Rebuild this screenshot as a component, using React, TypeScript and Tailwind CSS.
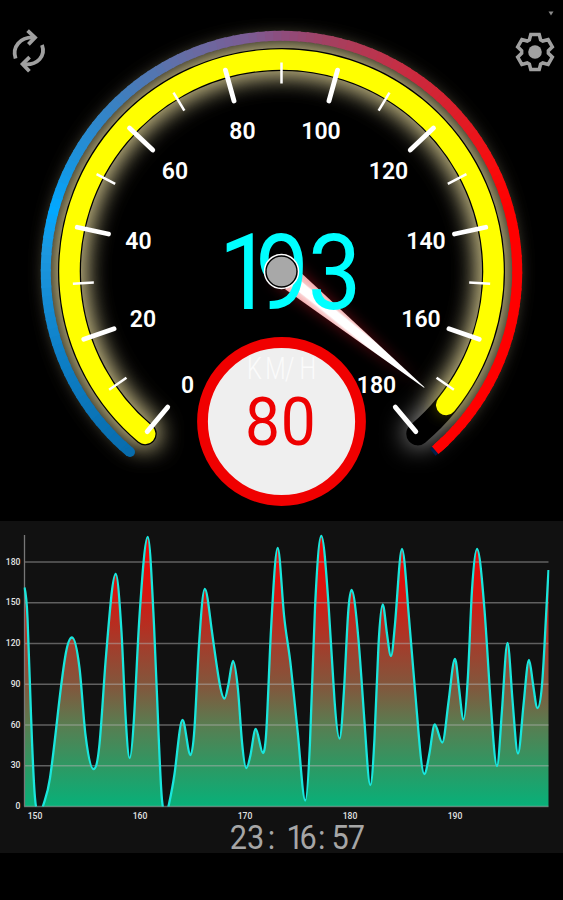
import React from "react";

const CX = 281.5;
const CY = 271.5;

const polar = (r: number, deg: number): [number, number] => {
  const a = (deg * Math.PI) / 180;
  return [CX + r * Math.cos(a), CY + r * Math.sin(a)];
};

const arc = (r: number, from: number, to: number) => {
  const [x0, y0] = polar(r, from);
  const [x1, y1] = polar(r, to);
  return `M${x0.toFixed(2)} ${y0.toFixed(2)}A${r} ${r} 0 ${to - from > 180 ? 1 : 0} 1 ${x1.toFixed(2)} ${y1.toFixed(2)}`;
};

const ringStops: [number, number[]][] = [
  [130, [8, 108, 172]],
  [160, [14, 128, 200]],
  [185, [28, 152, 224]],
  [195, [2, 168, 255]],
  [208, [28, 146, 220]],
  [224, [56, 130, 195]],
  [245, [100, 110, 166]],
  [262, [124, 92, 148]],
  [272, [146, 74, 120]],
  [284, [168, 62, 92]],
  [300, [198, 46, 68]],
  [315, [216, 32, 46]],
  [332, [246, 14, 16]],
  [345, [255, 0, 0]],
  [410, [255, 0, 0]],
];

const ringColor = (deg: number) => {
  let i = 0;
  while (i < ringStops.length - 2 && deg > ringStops[i + 1][0]) i++;
  const [a, ca] = ringStops[i];
  const [b, cb] = ringStops[i + 1];
  const t = Math.min(1, Math.max(0, (deg - a) / (b - a)));
  return `rgb(${ca.map((v, k) => Math.round(v + (cb[k] - v) * t)).join(",")})`;
};

const labels: [string, number, number][] = [
  ["0", 187.5, 384.5],
  ["20", 143, 319],
  ["40", 138.5, 241],
  ["60", 175, 171],
  ["80", 242.5, 131],
  ["100", 321, 131],
  ["120", 388.5, 171],
  ["140", 426, 241],
  ["160", 421, 319],
  ["180", 376.5, 384.5],
];

function Gauge() {
  const ticks = Array.from({ length: 19 }, (_, i) => {
    const deg = 130 + (i * 280) / 18;
    const major = i % 2 === 0;
    return { p: polar(major ? 177 : 188, deg), q: polar(209, deg), major };
  });
  const steps = Array.from({ length: 139 }, (_, i) => 130 + i * 2);
  return (
    <svg className="block h-[521px] w-[563px]" viewBox="0 0 563 521" fill="none">
      <defs>
        <filter id="glow" filterUnits="userSpaceOnUse" x="-40" y="-40" width="643" height="600">
          <feGaussianBlur stdDeviation="13" />
        </filter>
        <filter id="soft" filterUnits="userSpaceOnUse" x="380" y="340" width="120" height="120">
          <feGaussianBlur stdDeviation="7" />
        </filter>
        <linearGradient id="needle" gradientUnits="userSpaceOnUse" x1="0" y1="-11.5" x2="0" y2="11.5">
          <stop offset="0" stopColor="#f3a9ab" />
          <stop offset="0.25" stopColor="#f7c4c4" />
          <stop offset="0.34" stopColor="#ffffff" />
          <stop offset="0.66" stopColor="#ffffff" />
          <stop offset="0.75" stopColor="#f9cfd0" />
          <stop offset="1" stopColor="#f3a9ab" />
        </linearGradient>
        <clipPath id="trackEnd">
          <path d="M420 380H500V470H380Z" />
        </clipPath>
      </defs>

      <path d={arc(212, 130, 410)} stroke="#ffffff" strokeOpacity="0.66" strokeWidth="24" strokeLinecap="round" filter="url(#glow)" />
      <path d={arc(212, 130, 399)} stroke="#ffe878" strokeOpacity="0.72" strokeWidth="24" strokeLinecap="round" filter="url(#glow)" />
      <path d={arc(212, 130, 410)} stroke="#000000" strokeWidth="23" strokeLinecap="round" />
      <g clipPath="url(#trackEnd)">
        <path d={arc(212, 390, 400)} stroke="#8a8000" strokeOpacity="0.5" strokeWidth="16" strokeLinecap="round" filter="url(#soft)" />
      </g>
      <path d={arc(212, 130, 399)} stroke="#ffff00" strokeWidth="20.5" strokeLinecap="round" />

      <path d={arc(235.7, 408, 410.1)} stroke="#02204c" strokeWidth="9" />
      {steps.map((d) => (
        <path key={d} d={arc(235.7, d, Math.min(d + 2.6, 409.3))} stroke={ringColor(d + 1)} strokeWidth="10" />
      ))}
      <path d={arc(235.7, 406, 409.3)} stroke="#ff0000" strokeWidth="10" />
      <circle cx={polar(235.7, 130)[0]} cy={polar(235.7, 130)[1]} r="5" fill={ringColor(130)} />

      {ticks.map(({ p, q, major }, i) => (
        <line key={i} x1={p[0]} y1={p[1]} x2={q[0]} y2={q[1]} stroke="#ffffff" strokeWidth={major ? 4.8 : 2.5} strokeLinecap={major ? "round" : "butt"} />
      ))}

      {labels.map(([t, x, y]) => (
        <text key={t} x={x} y={y + 8.3} fill="#ffffff" textAnchor="middle" className="font-['Roboto',sans-serif] text-[23px] font-semibold">
          {t}
        </text>
      ))}

      <g transform={`translate(${CX} ${CY}) rotate(39.1)`}>
        <path d="M0 -14L176 0L0 14Z" fill="#ff2030" fillOpacity="0.35" className="blur-[7px]" />
        <path d="M14 -11.5L184 -0.4V0.4L14 11.5Z" fill="url(#needle)" />
        <path d="M14 -5L184 0L14 5Z" fill="#ffffff" />
      </g>

      <circle cx="281.5" cy="421.5" r="79" fill="#efefef" stroke="#f00000" strokeWidth="10.8" />
      <text transform="scale(0.76 1)" y="379.500" x="325 349 375 394" fill="#fbfbfb" className="font-['Roboto',sans-serif] text-[31px] font-light">KM/H</text>
      <text transform="scale(0.93 1)" x="263.5 302" y="445.5" fill="#ee0000" className="font-['Roboto',sans-serif] text-[67px] font-normal">80</text>

      <text transform="scale(0.9 1)" x="243 284 342" y="309.500" fill="#00ffff" className="font-['Roboto',sans-serif] text-[106px] font-normal">193</text>

      <circle cx={CX} cy={CY} r="17" fill="#000000" stroke="#ffffff" strokeWidth="1.5" />
      <circle cx={CX} cy={CY} r="14.8" fill="#a8a8a8" />
    </svg>
  );
}

function RefreshIcon() {
  return (
    <svg className="h-[50px] w-[42px]" viewBox="8 26 42 50" fill="none" stroke="#a0a0a0" strokeWidth="3.8">
      <path d="M15.6 58.5C11.8 47 20 36.8 34 37.4" />
      <path d="M27.6 30.6L35 37.5L28.4 44.4" />
      <path d="M42 45C46 56 37.5 65.4 24 64.3" />
      <path d="M29.6 57.2L22.6 64L29.4 71.2" />
    </svg>
  );
}

function GearIcon() {
  const pts: string[] = [];
  for (let i = 0; i < 6; i++) {
    const a = (i * Math.PI) / 3;
    for (const [x, y] of [[-5.6, -12.2], [-4.2, -17.6], [4.2, -17.6], [5.6, -12.2]]) {
      pts.push(`${(x * Math.cos(a) - y * Math.sin(a)).toFixed(2)},${(x * Math.sin(a) + y * Math.cos(a)).toFixed(2)}`);
    }
  }
  return (
    <svg className="h-[42px] w-[42px]" viewBox="-21 -21 42 42" fill="none">
      <polygon points={pts.join(" ")} stroke="#a0a0a0" strokeWidth="3.5" strokeLinejoin="miter" />
      <circle r="6.8" fill="#a0a0a0" />
    </svg>
  );
}

const samples: [number, number][] = [
  [24.5, 587.5], [27.5, 618], [31, 715], [35, 798], [38.5, 812], [43, 806], [50, 778], [57, 721],
  [65, 658], [72, 637.5], [79.5, 668], [85.5, 735], [93.5, 769], [99.5, 744], [106, 656], [115.7, 574],
  [121.5, 632], [125.5, 715], [129.7, 758], [134, 718], [139.5, 616], [147.8, 537], [154, 625],
  [158, 720], [162, 800], [165.3, 812], [169, 804], [174.5, 774], [182.5, 720], [190.5, 755], [194.5, 728],
  [199, 645], [204.8, 589], [212, 632], [219, 680], [224.5, 698.5], [228.5, 684], [233, 661], [238, 690],
  [242, 742], [246.3, 768], [250.5, 755], [255.7, 729], [263, 753], [266.5, 728], [271, 630], [277.7, 548],
  [284, 615], [291, 668], [298, 735], [305.3, 800.5], [310, 742], [315, 608], [321.3, 536], [328.5, 604],
  [334.5, 700], [339.5, 738.5], [344, 690], [348, 615], [351.5, 590], [358.5, 640], [364.5, 722],
  [370.3, 785], [374.5, 738], [378.5, 645], [382.7, 604.5], [387, 634], [391, 656], [395, 624], [402, 549],
  [408.5, 612], [415, 690], [424.3, 774], [429.5, 753], [434.7, 724.5], [442.3, 742.5], [448.5, 702],
  [455, 659], [459, 688], [463.5, 719.5], [468, 675], [472, 590], [477, 549], [484.5, 610], [490.5, 700],
  [497, 766], [502, 710], [507.5, 643], [512.5, 700], [518, 753.5], [523.5, 705], [529, 660], [533, 684],
  [537.5, 708], [542, 685], [545.5, 626], [548.5, 570],
];

// Monotone cubic interpolation keeps every local extremum flat.
const smooth = (pts: [number, number][]) => {
  const n = pts.length;
  const s = pts.slice(1).map((p, i) => (p[1] - pts[i][1]) / (p[0] - pts[i][0]));
  const m = pts.map((_, i) => {
    if (i === 0) return s[0] * 0.4;
    if (i === n - 1) return s[n - 2];
    if (s[i - 1] * s[i] <= 0) return 0;
    const cap = 2.8 * Math.min(Math.abs(s[i - 1]), Math.abs(s[i]));
    const mean = (pts[i + 1][1] - pts[i - 1][1]) / (pts[i + 1][0] - pts[i - 1][0]);
    return Math.sign(mean) * Math.min(Math.abs(mean) * 1.12, cap);
  });
  let d = `M${pts[0][0]} ${pts[0][1]}`;
  for (let i = 1; i < n; i++) {
    const h = (pts[i][0] - pts[i - 1][0]) / 3;
    d += `C${(pts[i - 1][0] + h).toFixed(2)} ${(pts[i - 1][1] + m[i - 1] * h).toFixed(2)} ${(pts[i][0] - h).toFixed(2)} ${(pts[i][1] - m[i] * h).toFixed(2)} ${pts[i][0]} ${pts[i][1]}`;
  }
  return d;
};

function History() {
  const line = smooth(samples);
  return (
    <svg className="block h-[303px] w-[563px]" viewBox="0 521 563 303" fill="none">
      <defs>
        <linearGradient id="area" gradientUnits="userSpaceOnUse" x1="0" y1="536" x2="0" y2="806">
          <stop offset="0" stopColor="#f60000" />
          <stop offset="0.22" stopColor="#d21811" />
          <stop offset="0.4" stopColor="#a43c2b" />
          <stop offset="0.57" stopColor="#7e5a3e" />
          <stop offset="0.7" stopColor="#597d51" />
          <stop offset="0.85" stopColor="#2e9863" />
          <stop offset="1" stopColor="#08b079" />
        </linearGradient>
        <clipPath id="plot">
          <path d="M23.5 534H549.5V806.5H23.5Z" />
        </clipPath>
      </defs>
      <g clipPath="url(#plot)">
        <path d={`${line}V830H24.5Z`} fill="url(#area)" />
      </g>
      {[0, 30, 60, 90, 120, 150, 180].map((v) => (
        <g key={v}>
          <path d={`M24 ${806.5 - v * 1.3583}H548.5`} stroke="#b0b0b0" strokeOpacity="0.5" strokeWidth="1.4" />
          <text x="20.5" y={809 - v * 1.3583} textAnchor="end" fill="#e4e4e4" className="font-['Roboto',sans-serif] text-[8.6px] font-medium">{v}</text>
        </g>
      ))}
      <path d="M24.5 535V806.5" stroke="#777777" strokeWidth="1.3" />
      <g clipPath="url(#plot)">
        <path d={line} stroke="#19e6dc" strokeWidth="2.3" strokeLinejoin="round" />
      </g>
      {[150, 160, 170, 180, 190].map((v, i) => (
        <text key={v} x={35 + i * 105} y="819" textAnchor="middle" fill="#e4e4e4" className="font-['Roboto',sans-serif] text-[8.6px] font-medium">{v}</text>
      ))}
    </svg>
  );
}

export default function App() {
  return (
    <main className="flex h-[900px] w-[563px] flex-col overflow-hidden bg-black">
      <section className="relative h-[521px]">
        <Gauge />
        <button className="absolute top-[26px] left-2" aria-label="Reset">
          <RefreshIcon />
        </button>
        <button className="absolute top-[31px] left-[514px]" aria-label="Settings">
          <GearIcon />
        </button>
        <svg className="absolute top-[11px] left-[548px] h-[5px] w-[6px]" viewBox="0 0 6 5">
          <path d="M0.5 0.5H5.5L3 4.5Z" fill="#8a8a8a" />
        </svg>
      </section>
      <section className="h-[332px] bg-[#111111]">
        <History />
        <svg className="block h-[29px] w-[563px] overflow-visible" viewBox="0 824 563 29">
          <text transform="scale(0.93 1)" x="247 265.500 288 300 308 322 342 356.500 374" y="849" fill="#a6a6a6" className="font-['Roboto',sans-serif] text-[33px] font-normal">23: 16:57</text>
        </svg>
      </section>
    </main>
  );
}
